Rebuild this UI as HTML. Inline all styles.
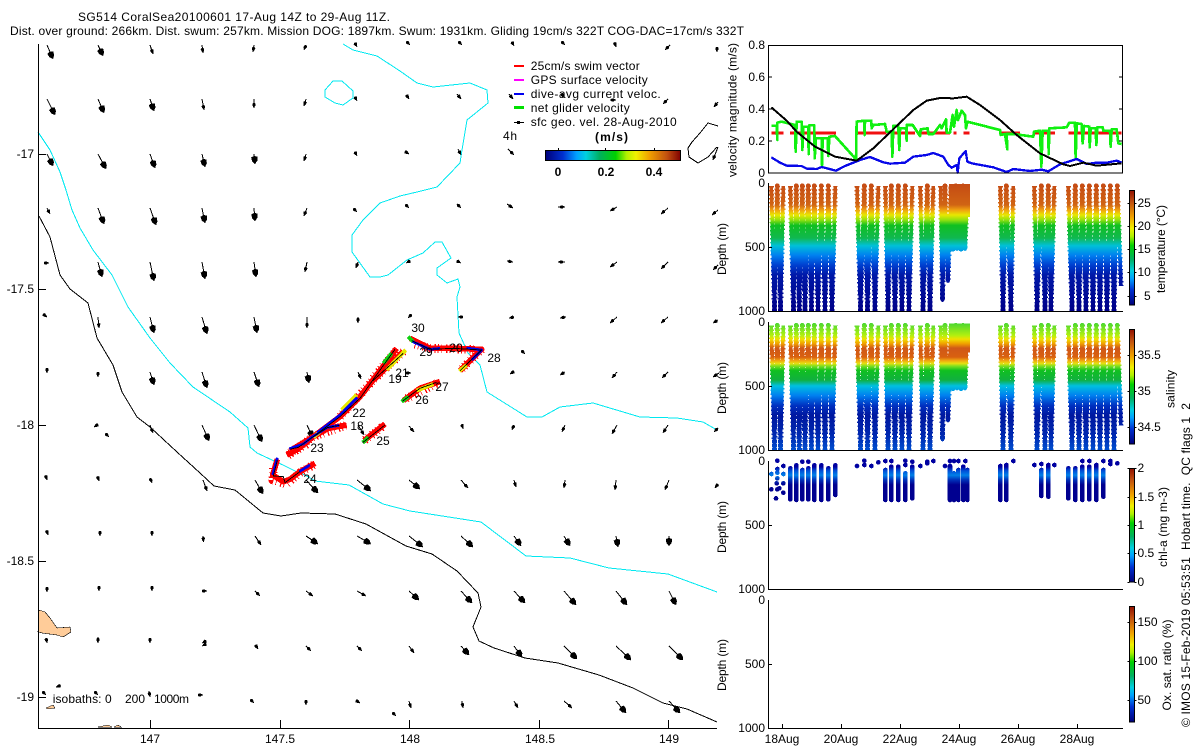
<!DOCTYPE html>
<html><head><meta charset="utf-8"><title>SG514 CoralSea20100601</title>
<style>
html,body{margin:0;padding:0;background:#fff}
svg{display:block}
text{font-family:"Liberation Sans",Arial,sans-serif;font-size:12px;fill:#000;white-space:pre;shape-rendering:auto}
.b{font-weight:bold}
.m{text-anchor:middle}
.e{text-anchor:end}
</style></head><body>
<svg xmlns="http://www.w3.org/2000/svg" width="1200" height="750" viewBox="0 0 1200 750" shape-rendering="crispEdges">
<defs>
<linearGradient id="jH" x1="0" x2="1" y1="0" y2="0"><stop offset="0" stop-color="#00007a"/><stop offset=".13" stop-color="#0030d0"/><stop offset=".23" stop-color="#00a0ff"/><stop offset=".3" stop-color="#00d0e0"/><stop offset=".4" stop-color="#00b060"/><stop offset=".52" stop-color="#00d000"/><stop offset=".6" stop-color="#b0f000"/><stop offset=".67" stop-color="#f0f000"/><stop offset=".77" stop-color="#f0a000"/><stop offset=".9" stop-color="#c05010"/><stop offset="1" stop-color="#800000"/></linearGradient>
<linearGradient id="jV" x1="0" x2="0" y1="1" y2="0"><stop offset="0" stop-color="#00007a"/><stop offset=".13" stop-color="#0030d0"/><stop offset=".23" stop-color="#00a0ff"/><stop offset=".3" stop-color="#00d0e0"/><stop offset=".4" stop-color="#00b060"/><stop offset=".52" stop-color="#00d000"/><stop offset=".6" stop-color="#b0f000"/><stop offset=".67" stop-color="#f0f000"/><stop offset=".77" stop-color="#f0a000"/><stop offset=".9" stop-color="#c05010"/><stop offset="1" stop-color="#901000"/></linearGradient>
<linearGradient id="gT" gradientUnits="userSpaceOnUse" x1="0" x2="0" y1="183" y2="311">
<stop offset="0" stop-color="#c44a14"/><stop offset=".17" stop-color="#d06414"/><stop offset=".21" stop-color="#f0a010"/><stop offset=".25" stop-color="#e8e800"/><stop offset=".29" stop-color="#90e010"/><stop offset=".33" stop-color="#10c020"/><stop offset=".43" stop-color="#10b850"/><stop offset=".49" stop-color="#00c0d8"/><stop offset=".565" stop-color="#0080f0"/><stop offset=".64" stop-color="#0040d0"/><stop offset=".72" stop-color="#0018a8"/><stop offset="1" stop-color="#000088"/></linearGradient>
<linearGradient id="gS" gradientUnits="userSpaceOnUse" x1="0" x2="0" y1="183" y2="311">
<stop offset=".01" stop-color="#50d830"/><stop offset=".1" stop-color="#b0f010"/><stop offset=".13" stop-color="#f0e000"/><stop offset=".165" stop-color="#f0a000"/><stop offset=".2" stop-color="#d05818"/><stop offset=".27" stop-color="#d86010"/><stop offset=".295" stop-color="#f0a010"/><stop offset=".32" stop-color="#e8e010"/><stop offset=".34" stop-color="#80e020"/><stop offset=".375" stop-color="#10c020"/><stop offset=".45" stop-color="#10b040"/><stop offset=".495" stop-color="#00c0e0"/><stop offset=".57" stop-color="#0080f0"/><stop offset=".65" stop-color="#0030c0"/><stop offset=".725" stop-color="#0018a0"/><stop offset=".88" stop-color="#0028b0"/><stop offset="1" stop-color="#0050d0"/></linearGradient>
<linearGradient id="gC" gradientUnits="userSpaceOnUse" x1="0" x2="0" y1="30" y2="150">
<stop offset=".17" stop-color="#0000a0"/><stop offset=".27" stop-color="#0050d8"/><stop offset=".38" stop-color="#0080e8"/><stop offset=".5" stop-color="#0030b8"/><stop offset=".62" stop-color="#000090"/></linearGradient>
<clipPath id="c1"><rect x="768" y="178" width="356" height="133"/></clipPath>
<clipPath id="c2"><rect x="768" y="317" width="356" height="133"/></clipPath>
<marker id="hB" markerUnits="userSpaceOnUse" markerWidth="10" markerHeight="10" refX="8" refY="5" orient="auto"><path d="M0 4.5L1 1.8L5 2.4L8 5L5 7.6L1 8.2L0 5.5z" fill="#000"/></marker>
<marker id="hS" markerUnits="userSpaceOnUse" markerWidth="8" markerHeight="8" refX="5" refY="4" orient="auto"><path d="M0 3.4L1 2.2L3 2.8L5 4L3 5.2L1 5.8L0 4.6z" fill="#000"/></marker>
<path id="dvp" d="M771.3 186L774.5 310L777.3 186L780.5 310L783.3 186M790.3 186L793.5 310L796.3 186L799.3 310L802.3 186L805 310L808.3 186L811.5 310L814.3 186L818 310L821.3 186L825 310L828.3 186L832 310L835.3 186M857 186L860.5 310L864.3 186L867.5 310L871.3 186L875 310L878.3 186M885.3 186L888 310L891.3 186L895 310L898.3 186L902 310L905.3 186L909 310L912.3 186M920.3 186L923 310L927.3 186L930 310L933.3 186M940.7 186L942.5 300L945 186L948 281L951 186L953 249L955.7 186L957 249L959 186L961 249L963 186L965 249L967.3 186M1000.3 186L1003 310L1006.3 186L1011 310L1013.3 186M1034.3 186L1037 310L1041.3 186L1045 310L1048.3 186L1051 310L1054.3 186M1068.3 186L1072 310L1075.3 186L1079 310L1082.3 186L1086 310L1089.3 186L1093 310L1096.3 186L1100 310L1103.3 186L1107 310L1110.3 186L1114 310L1117.3 186L1121 286" fill="none" stroke-linejoin="round"/>
</defs>

<!-- TITLE -->
<text x="78" y="21" textLength="312">SG514 CoralSea20100601 17-Aug 14Z to 29-Aug 11Z.</text>
<text x="10" y="35" textLength="734">Dist. over ground: 266km. Dist. swum: 257km. Mission DOG: 1897km. Swum: 1931km. Gliding 19cm/s 322T COG-DAC=17cm/s 332T</text>

<!-- MAP: isobaths -->
<g fill="none" stroke="#00e8f0" stroke-width="1">
<path d="M38 132L50 150L60 172L66 190L72 210L80 228L93 250L112 275L128 307L150 338L170 363L193 387L230 412L248 428L250 447L257 453L272 460L283 465L297 472L305 475L315 481L349 485L383 504L410 511L481 522L526 556L570 558L609 568L668 574L717 592"/>
<path d="M343 44L353 50L377 56L400 71L417 83L433 87L470 83L487 90L488 103L467 120L462 150L460 163L437 187L417 192L400 196L380 203L363 220L352 235L352 252L370 277L380 277L388 275L407 260L423 253L435 242L442 242L451 258L437 268L437 275L447 283L458 279L460 287L457 297L459 333L468 353L480 365L487 392L527 417L542 417L560 407L593 403L640 417L677 418L703 422L717 430"/>
<path d="M325 90L333 81L342 81L353 91L353 98L343 105L335 103L325 97z"/>
</g>
<g fill="none" stroke="#000" stroke-width="1">
<path d="M39 216L50 237L60 275L70 289L88 303L97 338L113 365L122 392L137 417L150 427L177 452L200 473L214 486L235 490L263 513L281 516L301 513L335 514L366 524L406 546L432 554L457 571L478 593L481 607L473 627L479 641L494 648L525 658L558 663L599 675L633 688L663 703L687 709L717 722"/>
<path d="M718 126L708 123L700 133L692 142L688 148L689 157L698 163L708 157L717 147"/>
</g>
<!-- land -->
<path d="M39 610L45 612L50 618L57 628L70 627L71 632L63 637L57 635L42 633L38 632z" fill="#ffcc99" stroke="#000" stroke-width=".6"/>
<path d="M46 708L53 705L55 708L48 709zM98 727L108 725L112 727zM114 727L118 725L121 727z" fill="#ffcc99" stroke="#000" stroke-width=".5"/>

<!-- MAP: arrows, long -->
<g fill="none" stroke="#000" stroke-width="1" marker-end="url(#hB)">
<path d="M47 45L53 59"/><path d="M98 45L103 56"/><path d="M47 99L55 115"/><path d="M98 99L104 113"/><path d="M150 99L154 111"/>
<path d="M47 154L53 166"/><path d="M98 154L106 169"/><path d="M150 154L155 168"/><path d="M202 154L205 167"/><path d="M254 154L255 164"/>
<path d="M98 208L104 224"/><path d="M150 208L156 225"/><path d="M202 208L205 223"/><path d="M254 208L255 221"/>
<path d="M98 262L102 277"/><path d="M150 262L154 281"/><path d="M202 262L205 279"/><path d="M254 262L256 277"/>
<path d="M150 317L154 333"/><path d="M202 317L207 334"/><path d="M254 317L257 333"/>
<path d="M150 372L154 385"/><path d="M202 372L207 388"/><path d="M254 372L259 387"/><path d="M307 372L309 383"/>
<path d="M202 425L209 441"/><path d="M254 425L262 442"/><path d="M307 425L313 438"/>
<path d="M255 480L263 494"/><path d="M306 480L318 493"/><path d="M357 480L371 491"/><path d="M409 480L420 489"/>
<path d="M306 536L318 544"/><path d="M357 536L371 544"/><path d="M409 536L423 547"/><path d="M461 536L473 547"/><path d="M514 536L521 546"/><path d="M564 536L570 546"/><path d="M616 536L618 547"/><path d="M669 536L669 546"/>
<path d="M409 591L419 600"/><path d="M461 591L472 603"/><path d="M514 591L525 603"/><path d="M564 591L576 605"/><path d="M616 591L627 605"/><path d="M669 591L676 605"/>
<path d="M461 646L469 655"/><path d="M514 646L522 657"/><path d="M564 646L577 659"/><path d="M616 646L631 660"/><path d="M669 646L683 660"/>
<path d="M616 701L626 713"/><path d="M669 701L680 713"/>
</g>
<!-- MAP: arrows, short -->
<g fill="none" stroke="#000" stroke-width="1" marker-end="url(#hS)">
<path d="M150 45L153 54"/><path d="M202 45L203 53"/><path d="M254 45L253 52"/><path d="M306 45L304 50"/><path d="M356 45L357 47"/>
<path d="M202 99L204 110"/><path d="M254 99L254 108"/><path d="M306 99L304 106"/><path d="M356 99L357 101"/>
<path d="M306 154L304 161"/><path d="M356 154L357 156"/>
<path d="M47 208L50 214"/><path d="M307 208L304 216"/><path d="M355 210L357 212"/>
<path d="M46 263L49 263"/><path d="M307 262L305 272"/><path d="M358 262L356 268"/>
<path d="M43 314L47 317"/><path d="M98 317L99 328"/><path d="M307 317L307 328"/><path d="M358 317L358 323"/>
<path d="M47 368L47 373"/><path d="M98 372L98 377"/><path d="M358 372L361 379"/>
<path d="M97 425L94 427"/><path d="M107 435L109 437"/><path d="M150 425L153 433"/><path d="M358 425L364 435"/>
<path d="M46 477L47 480"/><path d="M98 478L99 481"/><path d="M150 478L152 483"/><path d="M203 480L207 491"/><path d="M461 480L468 488"/><path d="M514 480L516 487"/><path d="M565 480L564 488"/><path d="M616 480L615 490"/><path d="M669 480L665 490"/><path d="M718 484L715 488"/>
<path d="M47 532L48 535"/><path d="M100 532L100 536"/><path d="M152 532L152 536"/><path d="M203 536L203.5 542"/><path d="M255 536L261 545"/>
<path d="M47 589L47 592"/><path d="M99 587L99 591"/><path d="M152 587L152 591"/><path d="M203 591L207 591"/><path d="M255 591L260 596"/><path d="M306 591L313 596"/><path d="M357 591L366 596"/>
<path d="M46 638L47 643"/><path d="M98 637L98 643"/><path d="M150 640L150 643"/><path d="M204 642L202 643"/><path d="M204 645L202 646"/><path d="M256 646L258 649"/><path d="M306 646L311 651"/><path d="M357 646L362 651"/><path d="M409 646L414 653"/>
<path d="M44 693L46 695"/><path d="M59 686L56 687"/><path d="M96 693L98 695"/><path d="M149 691L150 697"/><path d="M200 695L203 695"/><path d="M252 701L254 703"/><path d="M306 701L306 705"/><path d="M357 701L360 703"/><path d="M409 701L411 708"/><path d="M462 701L463 708"/><path d="M514 701L518 708"/><path d="M564 701L572 708"/>
<path d="M409 44L410 45"/><path d="M461 44L462 45"/><path d="M513 44L514 46"/><path d="M564 44L565 45"/><path d="M615 44L616 47"/><path d="M670 45L665 50"/><path d="M717 49L717 52"/>
<path d="M407 96L409 99"/><path d="M457 94L461 99"/><path d="M509 94L513 99"/><path d="M562 93L563 98"/><path d="M610 100L616 100"/><path d="M668 99L663 104"/><path d="M718 102L714 107"/>
<path d="M406 152L409 154"/><path d="M458 149L461 155"/><path d="M508 149L514 155"/><path d="M718 147L713 160"/>
<path d="M407 206L409 208"/><path d="M457 204L461 208"/><path d="M507 204L513 208"/><path d="M558 207L565 207"/><path d="M617 207L610 211"/><path d="M668 208L661 214"/><path d="M718 210L712 215"/>
<path d="M408 262L406 263"/><path d="M457 261L461 263"/><path d="M507 261L513 262"/><path d="M565 262L558 262"/><path d="M617 262L610 267"/><path d="M668 262L661 269"/><path d="M718 265L713 270"/>
<path d="M409 317L408 318"/><path d="M462 317L458 317"/><path d="M514 317L509 318"/><path d="M566 317L560 318"/><path d="M617 317L610 323"/><path d="M668 317L661 323"/><path d="M718 320L713 323"/>
<path d="M409 373L411 373"/><path d="M513 372L510 374"/><path d="M565 372L560 375"/><path d="M617 372L612 378"/><path d="M668 372L662 378"/><path d="M719 373L713 377"/>
<path d="M409 426L414 432"/><path d="M462 425L463 429"/><path d="M514 425L512 430"/><path d="M565 425L562 432"/><path d="M617 425L612 434"/><path d="M668 425L663 433"/><path d="M718 428L714 432"/>
<path d="M523 352L525 354"/><path d="M395 715L396 716"/>
</g>

<!-- TRACK -->
<g transform="translate(240 320) scale(.3333)" fill="none" stroke-linejoin="round">
<g stroke="#f00" stroke-width="17">
<path d="M140 405L175 387L220 350L300 290L360 230L395 185L470 85"/><path d="M150 392L220 350L265 325L320 315"/><path d="M395 185L490 95"/><path d="M300 290L355 225"/><path d="M372 362L435 312"/><path d="M490 242L540 205L600 185"/><path d="M510 55L570 85L640 85L725 88L660 152"/><path d="M112 418L98 465L130 485L150 478L180 455L225 430"/>
</g>
<g stroke="#f00" stroke-width="26" stroke-dasharray="3 8 2 12 4 6">
<path d="M145 405L205 370"/><path d="M400 175L470 90"/><path d="M375 360L430 318"/><path d="M500 235L590 190"/><path d="M525 72L570 85L700 88"/><path d="M100 445L98 480L140 492L180 458L225 432"/><path d="M150 400L220 350L320 315"/><path d="M300 290L400 180L490 95"/><path d="M725 88L660 152"/>
</g>
<g stroke="#e8e800" stroke-width="12">
<path d="M350 224L305 270"/><path d="M497 90L440 150"/><path d="M658 153L680 135"/><path d="M580 192L530 212"/><path d="M220 352L240 335"/>
</g>
<g stroke="#10d010" stroke-width="12">
<path d="M368 368L385 352"/><path d="M485 245L505 230"/><path d="M505 50L520 65"/><path d="M430 130L455 100"/>
</g>
<g stroke="#0000f0" stroke-width="8">
<path d="M148 386L190 372L215 352L262 322L298 316"/><path d="M232 338L300 285L352 232"/><path d="M112 413L98 465"/><path d="M178 455L210 435"/><path d="M518 65L570 88L600 85"/><path d="M680 84L725 90L695 120"/>
</g>
<g stroke="#000" stroke-width="2.6">
<path d="M150 388L175 382L220 350L300 290L360 235L395 185L465 88"/><path d="M395 185L490 100"/><path d="M368 368L435 315"/><path d="M487 244L540 205L590 187"/><path d="M515 62L570 88L640 85L725 90L660 152"/><path d="M112 420L100 468L130 470L135 488L180 455"/><path d="M220 350L262 323L298 316"/>
</g>
</g>
<g>
<text x="418" y="332" class="m">30</text><text x="426" y="356" class="m">29</text><text x="456" y="352" class="m">20</text><text x="402" y="377" class="m">21</text><text x="395" y="383" class="m">19</text><text x="359" y="417" class="m">22</text><text x="357" y="430" class="m">18</text><text x="317" y="452" class="m">23</text><text x="310" y="483" class="m">24</text><text x="383" y="445" class="m">25</text><text x="422" y="404" class="m">26</text><text x="442" y="391" class="m">27</text><text x="494" y="362" class="m">28</text>
</g>

<!-- MAP axes -->
<path d="M38.5 44V728.5H717M38 154.5h8M38 289.5h8M38 425.5h8M38 561.5h8M38 697.5h8M150.5 728V720M280.5 728V720M409.5 728V720M539.5 728V720M668.5 728V720" stroke="#000" fill="none"/>
<text x="34" y="158" class="e">-17</text><text x="34" y="293" class="e">-17.5</text><text x="34" y="429" class="e">-18</text><text x="34" y="565" class="e">-18.5</text><text x="34" y="701" class="e">-19</text>
<text x="150" y="743" class="m">147</text><text x="280" y="743" class="m">147.5</text><text x="410" y="743" class="m">148</text><text x="540" y="743" class="m">148.5</text><text x="669" y="743" class="m">149</text>
<text x="52.7" y="703" textLength="59">isobaths: 0</text><text x="125" y="703" textLength="20">200</text><text x="154" y="703" textLength="35">1000m</text>

<!-- LEGEND -->
<rect x="514" y="65" width="10" height="2" fill="#f00"/><rect x="514" y="79" width="10" height="2" fill="#f0f"/><rect x="514" y="93" width="10" height="2" fill="#0000f0"/><rect x="514" y="106" width="10" height="3" fill="#00e000"/><rect x="514" y="122" width="10" height="1" fill="#000"/>
<path d="M517 121h3v3h-3z" fill="#000"/>
<text x="530.7" y="70" textLength="109">25cm/s swim vector</text>
<text x="530.7" y="84" textLength="117">GPS surface velocity</text>
<text x="530.7" y="98" textLength="130">dive-avg current veloc.</text>
<text x="530.7" y="112" textLength="99">net glider velocity</text>
<text x="530.7" y="126" textLength="146">sfc geo. vel. 28-Aug-2010</text>
<text x="503" y="140" textLength="14">4h</text>
<text x="595" y="141" class="b" textLength="33">(m/s)</text>
<rect x="545.5" y="150.5" width="135" height="10" fill="url(#jH)" stroke="#000"/>
<path d="M558.5 150v-2M605.5 150v-2M654.5 150v-2" stroke="#000"/>
<text x="558" y="176" class="m b">0</text><text x="606" y="176" class="m b">0.2</text><text x="654" y="176" class="m b">0.4</text>

<!-- VELOCITY PANEL -->
<g transform="translate(730 30) scale(.33333)" fill="none" stroke-linejoin="round">
<path d="M124 309H160M180 309H318M383 309H470M490 309H555M570 309H660M670 309H680M700 309H718M815 309H870M910 309H975M1015 309H1175" stroke="#f01010" stroke-width="8"/>
<path d="M124 287L140 287L142 330L142 278L155 275L175 280L195 285L197 365L200 275L215 275L217 360L220 290L235 290L236 372L238 286L253 286L254 385L258 325L275 325L276 405L278 325L293 325L295 378L298 320L315 318L378 388L380 275L403 272L404 315L405 272L424 272L425 295L430 285L465 282L470 305L485 305L487 380L490 288L505 288L508 360L510 295L528 295L530 332L530 285L548 285L570 318L572 298L593 295L595 312L610 312L630 285L635 295L648 268L650 308L660 308L668 255L672 290L680 240L684 270L695 242L705 255L708 295L712 275L810 300L812 315L825 312L832 358L830 312L850 312L910 320L912 305L930 302L934 410L938 302L955 302L956 372L958 295L1010 292L1018 278L1035 278L1037 385L1040 280L1055 282L1058 340L1062 288L1078 290L1079 352L1082 295L1097 295L1099 345L1102 292L1118 292L1120 302L1140 303L1142 350L1145 298L1160 298L1165 340L1175 342" stroke="#10f010" stroke-width="8"/>
<path d="M124 382L150 398L170 407L215 408L230 416L260 417L275 411L318 422L345 408L390 390L420 381L460 397L480 401L525 398L550 380L590 375L610 369L640 380L655 405L665 413L680 405L683 428L688 385L707 363L712 395L725 400L790 412L830 426L850 417L900 423L935 419L955 424L990 403L1040 387L1070 402L1100 398L1130 398L1160 392L1175 398" stroke="#0808e8" stroke-width="7"/>
<path d="M124 232L170 272L200 305L255 350L315 380L380 392L430 355L550 240L590 212L630 204L670 205L710 200L750 225L810 270L860 315L930 370L1000 403L1020 408L1060 398L1100 407L1175 400" stroke="#000" stroke-width="6"/>
</g>
<rect x="768.5" y="45.5" width="354" height="127.5" fill="none" stroke="#000"/>
<path d="M768 77h4M768 109h4M768 141h4M1123 77h-4M1123 109h-4M1123 141h-4" stroke="#000" fill="none"/>
<text x="765" y="49" class="e">0.8</text><text x="765" y="81" class="e">0.6</text><text x="765" y="113" class="e">0.4</text><text x="765" y="145" class="e">0.2</text><text x="765" y="177" class="e">0</text>
<text x="0" y="0" class="m" transform="translate(736.5 110) rotate(-90)" textLength="134">velocity magnitude (m/s)</text>

<!-- TEMPERATURE -->
<g clip-path="url(#c1)" stroke="url(#gT)">
<use href="#dvp" stroke-width="3.6"/>
<use href="#dvp" stroke-width="5" stroke-dasharray="1.5 2.5"/>
<rect x="949" y="184" width="21" height="33" fill="url(#gT)" stroke="none"/>
</g>

<!-- SALINITY -->
<g clip-path="url(#c2)">
<g transform="translate(0 139.5)" stroke="url(#gS)">
<use href="#dvp" stroke-width="3.6"/>
<use href="#dvp" stroke-width="5" stroke-dasharray="1.5 2.5"/>
<rect x="949" y="184" width="21" height="29" fill="url(#gS)" stroke="none"/>
</g>
</g>

<!-- CHL -->
<g transform="translate(730 450) scale(.33333)" fill="none" stroke="url(#gC)" stroke-width="14" stroke-linecap="round">
<path d="M124 72h.1M142 32h.1M142 57h.1M142 68h.1M160 48h.1M160 72h.1M142 85h.1M140 100h.1M160 100h.1M160 128h.1M124 118h.1M142 118h.1M148 115h.1M138 145h.1M217 35h.1M235 35h.1M381 48h.1M403 32h.1M403 45h.1M424 48h.1M445 37h.1M466 33h.1M484 33h.1M526 32h.1M526 45h.1M547 35h.1M571 48h.1M592 35h.1M592 40h.1M610 33h.1M645 48h.1M660 33h.1M672 33h.1M685 33h.1M706 33h.1M850 33h.1M913 45h.1M934 42h.1M973 45h.1M1057 33h.1M1078 33h.1M1120 33h.1M1141 33h.1M1141 42h.1M1162 40h.1"/>
<path d="M181 55V148M199 46V150M217 60V148M235 55V148M253 46V150M274 46V150M295 55V148M316 46V135M466 60V150M484 50V150M505 50V150M526 70V150M547 50V145M660 48V150M672 70V150M685 60V150M700 50V150M712 60V150M811 48V150M829 45V150M934 60V138M955 45V140M1015 55V145M1036 55V150M1057 50V150M1078 50V148M1099 45V150M1120 60V140"/>
</g>

<!-- Panel axes -->
<g fill="none" stroke="#000">
<path d="M768.5 183V311.5H1123M768 247.5h4"/>
<path d="M768.5 322V450.5H1123M768 386.5h4"/>
<path d="M768.5 461V589.5H1123M768 525.5h4"/>
<path d="M768.5 600V728.5H1123M768 664.5h4M782.5 728v-4M841.5 728v-4M900.5 728v-4M959.5 728v-4M1018.5 728v-4M1077.5 728v-4"/>
</g>
<text x="765" y="187" class="e">0</text><text x="765" y="251" class="e">500</text><text x="765" y="315" class="e">1000</text>
<text x="765" y="326" class="e">0</text><text x="765" y="390" class="e">500</text><text x="765" y="454" class="e">1000</text>
<text x="765" y="465" class="e">0</text><text x="765" y="529" class="e">500</text><text x="765" y="593" class="e">1000</text>
<text x="765" y="604" class="e">0</text><text x="765" y="668" class="e">500</text><text x="765" y="732" class="e">1000</text>
<text class="m" transform="translate(726 249) rotate(-90)" textLength="52">Depth (m)</text>
<text class="m" transform="translate(726 388) rotate(-90)" textLength="52">Depth (m)</text>
<text class="m" transform="translate(726 527) rotate(-90)" textLength="52">Depth (m)</text>
<text class="m" transform="translate(726 665) rotate(-90)" textLength="52">Depth (m)</text>
<text x="782" y="743" class="m">18Aug</text><text x="841" y="743" class="m">20Aug</text><text x="900" y="743" class="m">22Aug</text><text x="959" y="743" class="m">24Aug</text><text x="1018" y="743" class="m">26Aug</text><text x="1077" y="743" class="m">28Aug</text>

<!-- COLORBARS -->
<rect x="1129.5" y="190.5" width="5" height="114.5" fill="url(#jV)" stroke="#000"/>
<rect x="1129.5" y="329.5" width="5" height="114.5" fill="url(#jV)" stroke="#000"/>
<rect x="1129.5" y="468.5" width="5" height="113.5" fill="url(#jV)" stroke="#000"/>
<rect x="1129.5" y="606.5" width="5" height="115.5" fill="url(#jV)" stroke="#000"/>
<path d="M1127.5 203.5h2M1134.5 203.5h2M1127.5 226.5h2M1134.5 226.5h2M1127.5 249.5h2M1134.5 249.5h2M1127.5 272.5h2M1134.5 272.5h2M1127.5 296.5h2M1134.5 296.5h2M1127.5 355.5h2M1134.5 355.5h2M1127.5 391.5h2M1134.5 391.5h2M1127.5 427.5h2M1134.5 427.5h2M1127.5 468.5h2M1134.5 468.5h2M1127.5 497.5h2M1134.5 497.5h2M1127.5 525.5h2M1134.5 525.5h2M1127.5 553.5h2M1134.5 553.5h2M1127.5 582.5h2M1134.5 582.5h2M1127.5 622.5h2M1134.5 622.5h2M1127.5 661.5h2M1134.5 661.5h2M1127.5 700.5h2M1134.5 700.5h2" stroke="#000" fill="none"/>
<text x="1137.5" y="207">25</text><text x="1137.5" y="230">20</text><text x="1137.5" y="253">15</text><text x="1137.5" y="276">10</text><text x="1144" y="300">5</text>
<text x="1137.5" y="359">35.5</text><text x="1137.5" y="395">35</text><text x="1137.5" y="431">34.5</text>
<text x="1137.5" y="472">2</text><text x="1137.5" y="501">1.5</text><text x="1137.5" y="529">1</text><text x="1137.5" y="557">0.5</text><text x="1137.5" y="586">0</text>
<text x="1137.5" y="626">150</text><text x="1137.5" y="665">100</text><text x="1137.5" y="704">50</text>
<text class="m" transform="translate(1165 249) rotate(-90)" textLength="88">temperature (°C)</text>
<text class="m" transform="translate(1174.5 389) rotate(-90)" textLength="38">salinity</text>
<text class="m" transform="translate(1167 527) rotate(-90)" textLength="80">chl-a (mg m-3)</text>
<text class="m" transform="translate(1171 665) rotate(-90)" textLength="91">Ox. sat. ratio (%)</text>
<text transform="translate(1190 727) rotate(-90)" textLength="324">© IMOS 15-Feb-2019 05:53:51  Hobart time.  QC flags 1  2</text>
</svg>
</body></html>
